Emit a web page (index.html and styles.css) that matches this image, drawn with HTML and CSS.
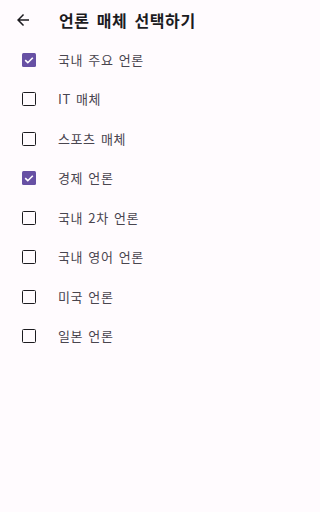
FILE: index.html
```html
<!DOCTYPE html>
<html lang="ko">
<head>
<meta charset="utf-8">
<link rel="stylesheet" href="styles.css">
</head>
<body>
<div class="screen">
  <header class="toolbar">
    <span class="nav">
      <svg viewBox="0 0 24 24" width="18" height="18"><path d="M20 11H7.83l5.59-5.59L12 4l-8 8 8 8 1.41-1.41L7.83 13H20v-2z" fill="#1c1b1f"/></svg>
    </span>
    <h1 class="title">언론 매체 선택하기</h1>
  </header>
  <ul class="list">
    <li class="row"><span class="box checked"><svg viewBox="0 0 14 14" width="14" height="14"><path d="M3.2 7.2l2.6 2.5 5-5" fill="none" stroke="#fff" stroke-width="1.6"/></svg></span><span class="label">국내 주요 언론</span></li>
    <li class="row"><span class="box"></span><span class="label">IT 매체</span></li>
    <li class="row"><span class="box"></span><span class="label">스포츠 매체</span></li>
    <li class="row"><span class="box checked"><svg viewBox="0 0 14 14" width="14" height="14"><path d="M3.2 7.2l2.6 2.5 5-5" fill="none" stroke="#fff" stroke-width="1.6"/></svg></span><span class="label">경제 언론</span></li>
    <li class="row"><span class="box"></span><span class="label">국내 2차 언론</span></li>
    <li class="row"><span class="box"></span><span class="label">국내 영어 언론</span></li>
    <li class="row"><span class="box"></span><span class="label">미국 언론</span></li>
    <li class="row"><span class="box"></span><span class="label">일본 언론</span></li>
  </ul>
</div>
</body>
</html>
```

FILE: styles.css
```css
html, body {
  margin: 0;
  padding: 0;
  background: #fffbfe;
}
body {
  font-family: "Noto Sans CJK KR", "Noto Sans", Roboto, sans-serif;
  color: #1c1b1f;
}
.screen {
  width: 288px;
  height: 512px;
}
.toolbar {
  height: 40px;
  display: flex;
  align-items: center;
  padding-left: 13.5px;
}
.nav {
  width: 18px;
  height: 18px;
  display: flex;
}
.title {
  margin: 0 0 0 27.5px;
  font-size: 16px;
  font-weight: 700;
  line-height: 20px;
  letter-spacing: 0.6px;
  word-spacing: 2px;
  color: #1c1b1f;
}
.list {
  list-style: none;
  margin: 0;
  padding: 0;
}
.row {
  height: 39.5px;
  display: flex;
  align-items: center;
  padding-left: 22px;
}
.box {
  width: 14px;
  height: 14px;
  box-sizing: border-box;
  border: 1.6px solid #1c1b1f;
  border-radius: 1.5px;
  display: flex;
  align-items: center;
  justify-content: center;
}
.box.checked {
  background: #6750a4;
  border: none;
}
.label {
  margin-left: 22px;
  font-size: 13px;
  line-height: 16px;
  letter-spacing: 0.6px;
  word-spacing: 1px;
  color: #49454f;
}
```
